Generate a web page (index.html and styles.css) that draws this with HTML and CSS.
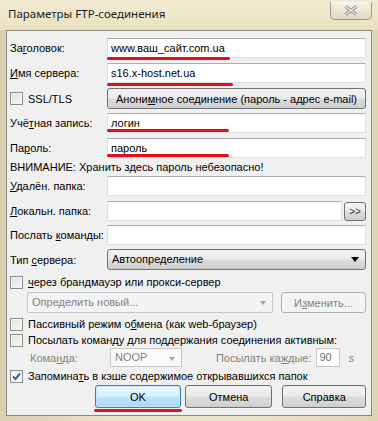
FILE: index.html
```html
<!DOCTYPE html>
<html lang="ru">
<head>
    <meta charset="UTF-8">
    <title>Параметры FTP-соединения</title>
    <link rel="stylesheet" href="styles.css">
</head>
<body>
    <div class="window">
        <div class="titlebar">
            <span class="title">Параметры FTP-соединения</span>
            <div class="close">
                <svg width="14" height="11" viewBox="0 0 14 11">
                    <path d="M1.5 1.5 L12.5 9.5 M12.5 1.5 L1.5 9.5" stroke="#8a8a8a" stroke-width="3" fill="none"/>
                    <path d="M1.5 1.5 L12.5 9.5 M12.5 1.5 L1.5 9.5" stroke="#f4f4f4" stroke-width="1.2" fill="none"/>
                </svg>
            </div>
        </div>

        <div class="client">
            <div class="row r-title">
                <span class="lbl">За<u>г</u>оловок:</span>
                <div class="field">
                    <div class="edit">www.ваш_сайт.com.ua</div>
                    <span class="mark mark-site"></span>
                </div>
            </div>
            <div class="row r-host">
                <span class="lbl"><u>И</u>мя сервера:</span>
                <div class="field">
                    <div class="edit">s16.x-host.net.ua</div>
                    <span class="mark mark-host"></span>
                </div>
            </div>
            <div class="row r-ssl">
                <span class="lbl check"><span class="cb"></span>SSL/TLS</span>
                <div class="btn wide">Анони<u>м</u>ное соединение (пароль - адрес e-mail)</div>
            </div>
            <div class="row r-user">
                <span class="lbl">Учё<u>т</u>ная запись:</span>
                <div class="field">
                    <div class="edit">логин</div>
                    <span class="mark mark-user"></span>
                </div>
            </div>
            <div class="row r-pass">
                <span class="lbl">Па<u>р</u>оль:</span>
                <div class="field">
                    <div class="edit">пароль</div>
                    <span class="mark mark-user"></span>
                </div>
            </div>
            <div class="warn">ВНИМАНИЕ: Хранить здесь пароль небезопасно!</div>
            <div class="row r-remote">
                <span class="lbl"><u>У</u>далён. папка:</span>
                <div class="edit"></div>
            </div>
            <div class="row r-local">
                <span class="lbl"><u>Л</u>окальн. папка:</span>
                <div class="edit grow"></div>
                <div class="btn browse">&gt;&gt;</div>
            </div>
            <div class="row r-cmd">
                <span class="lbl">Послать <u>к</u>оманды:</span>
                <div class="edit"></div>
            </div>
            <div class="row r-type">
                <span class="lbl">Тип <u>с</u>ервера:</span>
                <div class="combo">Автоопределение<span class="arrow"></span></div>
            </div>

            <div class="line r-proxy"><span class="cb"></span><span><u>ч</u>ерез брандмауэр или прокси-сервер</span></div>
            <div class="row r-proxysel">
                <div class="combo off proxy">Определить новый...<span class="arrow"></span></div>
                <div class="btn off change">И<u>з</u>менить...</div>
            </div>
            <div class="line r-passive"><span class="cb"></span><span>Пассивный режим о<u>б</u>мена (как web-браузер)</span></div>
            <div class="line r-keep"><span class="cb"></span><span>Посылать коман<u>д</u>у для поддержания соединения активным:</span></div>
            <div class="row r-noop">
                <span class="sub-lbl">Кома<u>н</u>да:</span>
                <div class="combo off noop">NOOP<span class="arrow"></span></div>
                <span class="sub-lbl every">Посылать ка<u>ж</u>дые:</span>
                <div class="edit off secs">90</div>
                <span class="sub-lbl unit">s</span>
            </div>
            <div class="line r-cache"><span class="cb on">
                <svg width="9" height="9" viewBox="0 0 9 9"><path d="M1 4.5 L3.5 7 L8 1.5" stroke="#3a5f9c" stroke-width="2" fill="none"/></svg>
            </span><span>Запомина<u>т</u>ь в кэше содержимое открывавшихся папок</span></div>

            <div class="buttons">
                <div class="field">
                    <div class="btn default">OK</div>
                    <span class="mark mark-ok"></span>
                </div>
                <div class="btn">Отмена</div>
                <div class="btn help">Справка</div>
            </div>
        </div>
    </div>
</body>
</html>
```

FILE: styles.css
```css
html, body {
    margin: 0;
    padding: 0;
}
body {
    width: 378px;
    height: 421px;
    overflow: hidden;
    font-family: "Liberation Sans", Arial, sans-serif;
    font-size: 11px;
    color: #000;
}
u {
    text-decoration: underline;
    text-underline-offset: 1px;
}
.window {
    height: 421px;
    box-sizing: border-box;
    display: flex;
    flex-direction: column;
    padding: 0 6px 5px 6px;
    background: linear-gradient(90deg, #d8ceb0 0%, #ece3c6 30%, #eee6cc 60%, #e0d6b6 100%);
}
.titlebar {
    height: 30px;
    flex: none;
    display: flex;
    justify-content: space-between;
    align-items: flex-start;
    background: linear-gradient(180deg, #f1ead2 0%, #efe6c8 60%, #e9dfbd 100%);
    margin: 0 -6px;
    padding: 0 6px 0 8px;
}
.title {
    font-family: "Noto Sans", "Open Sans", sans-serif;
    font-size: 11.5px;
    line-height: 12px;
    padding-top: 8px;
    color: #1c1c1c;
}
.close {
    width: 42px;
    height: 18px;
    margin-top: 2px;
    box-sizing: border-box;
    border: 1px solid #9c9a8e;
    border-top: none;
    border-radius: 0 0 5px 5px;
    background: linear-gradient(180deg, #f7f3e6 0%, #ebe4cf 55%, #e1d8bb 100%);
    display: flex;
    align-items: center;
    justify-content: center;
}
.client {
    flex: 1;
    background: #f0f0f0;
    border: 1px solid #8c8a80;
    padding: 7px 5px 0 3px;
    display: flex;
    flex-direction: column;
}
.row {
    display: flex;
    align-items: center;
    height: 20px;
}
.lbl {
    width: 97px;
    flex: none;
    white-space: nowrap;
}
.field {
    position: relative;
    flex: 1;
    display: flex;
}
.edit {
    flex: 1;
    height: 20px;
    box-sizing: border-box;
    background: #fff;
    border: 1px solid #dbdfe6;
    border-top-color: #abadb3;
    padding: 0 3px;
    line-height: 18px;
    white-space: nowrap;
}
.mark {
    position: absolute;
    left: 0;
    height: 3px;
    border-radius: 2px;
    background: #e3101c;
}
.mark-site { width: 123px; bottom: -2px; }
.mark-host { width: 126px; bottom: -3px; }
.mark-user { width: 122px; bottom: 1px; }
.mark-ok { width: 88px; bottom: -4px; left: -1px; }
.btn {
    height: 21px;
    box-sizing: border-box;
    border: 1px solid #707070;
    border-radius: 3px;
    background: linear-gradient(180deg, #f2f2f2 0%, #ebebeb 48%, #dddddd 52%, #cfcfcf 100%);
    display: flex;
    align-items: center;
    justify-content: center;
    white-space: nowrap;
}
.btn.wide {
    flex: 1;
}
.btn.browse {
    width: 22px;
    height: 19px;
    margin-left: 2px;
    font-size: 10px;
    color: #333;
}
.btn.off {
    border-color: #adb2b5;
    background: #f4f4f4;
    color: #838383;
}
.check {
    display: flex;
    align-items: center;
}
.cb {
    width: 13px;
    height: 13px;
    flex: none;
    box-sizing: border-box;
    border: 1px solid #8e8f8f;
    background: linear-gradient(135deg, #dcdcdc 0%, #f0f0f0 60%, #fbfbfb 100%);
    box-shadow: inset 0 0 0 1px #f4f4f4;
    margin-right: 5px;
    display: flex;
    align-items: center;
    justify-content: center;
}
.cb.on {
    background: #f6f6f6;
}
.combo {
    position: relative;
    flex: 1;
    height: 21px;
    box-sizing: border-box;
    border: 1px solid #707070;
    border-radius: 3px;
    background: linear-gradient(180deg, #f2f2f2 0%, #ebebeb 48%, #dddddd 52%, #cfcfcf 100%);
    padding-left: 4px;
    line-height: 19px;
}
.arrow {
    position: absolute;
    right: 6px;
    top: 7px;
    width: 0;
    height: 0;
    border-left: 4px solid transparent;
    border-right: 4px solid transparent;
    border-top: 5px solid #000;
}
.combo.off {
    border-color: #c5c8ca;
    background: #f4f4f4;
    color: #838383;
    border-radius: 2px;
}
.combo.off .arrow {
    border-top-color: #a5a5a5;
    border-top-width: 4px;
    border-left-width: 3px;
    border-right-width: 3px;
    top: 8px;
}
.warn {
    height: 14px;
    line-height: 14px;
    margin-top: 2px;
}
.line {
    display: flex;
    align-items: center;
    height: 16px;
    white-space: nowrap;
}
.r-host { margin-top: 5px; }
.r-ssl { margin-top: 5px; height: 21px; }
.r-user { margin-top: 4px; }
.r-pass { margin-top: 5px; }
.r-remote { margin-top: 2px; }
.r-local { margin-top: 5px; }
.r-cmd { margin-top: 4px; }
.r-type { margin-top: 4px; height: 21px; }
.r-proxy { margin-top: 4px; }
.r-proxysel { margin-top: 2px; padding-left: 17px; height: 21px; }
.combo.proxy { flex: none; width: 246px; }
.btn.change { width: 85px; margin-left: auto; }
.r-passive { margin-top: 3px; }
.r-noop { height: 19px; }
.sub-lbl {
    color: #838383;
    white-space: nowrap;
}
.r-noop .sub-lbl:first-child { margin-left: 20px; width: 80px; }
.combo.noop { flex: none; width: 72px; height: 19px; line-height: 17px; border-radius: 0; background: #fafafa; }
.every { margin-left: auto; margin-right: 4px; }
.edit.off { flex: none; width: 24px; height: 19px; line-height: 17px; color: #6d6d6d; border-color: #c5c8ca; }
.unit { margin-left: 9px; margin-right: 12px; }
.r-cache { margin-top: 1px; }
.buttons {
    display: flex;
    align-items: center;
    margin-top: 1px;
    padding-left: 85px;
    gap: 4px;
}
.buttons .field { flex: none; width: 86px; }
.buttons .btn { width: 89px; height: 23px; }
.buttons .field .btn { width: 86px; }
.btn.default {
    border-color: #3c7fb1;
    background: linear-gradient(180deg, #eaf6fd 0%, #d9f0fc 48%, #bee6fd 52%, #a7d9f5 100%);
    box-shadow: inset 0 0 0 1px #c6e6f8;
}
.btn.help { width: 85px; margin-left: 6px; }
```
